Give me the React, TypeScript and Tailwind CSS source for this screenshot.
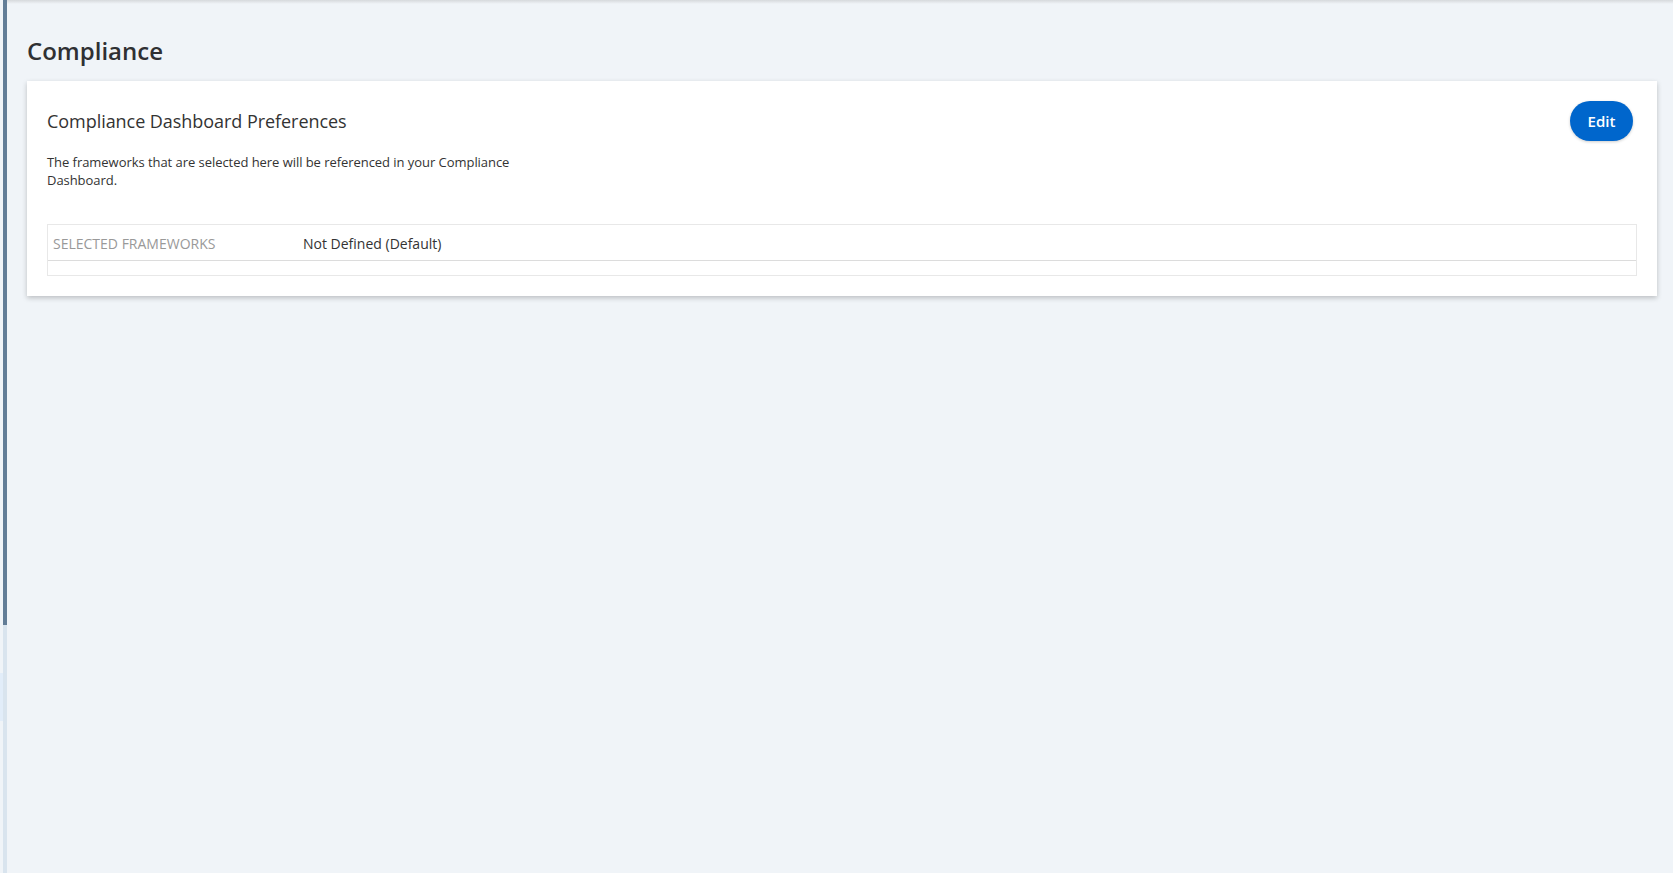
import React from "react";

export default function App() {
  return (
    <div
      className="flex h-[873px] w-full overflow-hidden bg-[#f0f4f8] text-[#333]"
      style={{ fontFamily: '"Open Sans", "Noto Sans", sans-serif' }}
    >
      {/* left edge strip */}
      <div className="flex h-full w-[7px] shrink-0">
        <div className="flex h-full w-[3px] flex-col">
          <div className="h-[673px]" />
          <div className="h-[48px] bg-[#e2edf9]" />
        </div>
        <div className="flex h-full w-[4px] flex-col bg-[#d9e4ee]">
          <div className="h-[625px] bg-[#627d97]" />
        </div>
      </div>

      {/* main */}
      <div className="relative flex-1 pl-[20px] pr-[16px] pt-[35px]">
        <div className="pointer-events-none absolute inset-x-0 top-0 h-[4px] bg-gradient-to-b from-[#d6d9dc] to-transparent" />
        <h1 className="text-[24px] font-semibold leading-[32px] text-[#2f3033]">
          Compliance
        </h1>

        <div className="mt-[14px] bg-white p-[20px] shadow-[0_2px_5px_rgba(0,0,0,0.22)]">
          <div className="flex h-[40px] items-center justify-between">
            <h2 className="text-[18px] font-normal leading-[27px] tracking-[-0.05px] text-[#333]">
              Compliance Dashboard Preferences
            </h2>
            <button className="mr-[4px] flex h-[40px] w-[63px] items-center justify-center rounded-full bg-[#0066cc] text-[15px] font-semibold text-white shadow-[0_1px_3px_rgba(0,0,0,0.2)]">
              Edit
            </button>
          </div>

          <p className="mt-[12px] max-w-[475px] text-[13px] leading-[18px] tracking-[-0.05px] text-[#333]">
            The frameworks that are selected here will be referenced in your Compliance Dashboard.
          </p>

          <div className="mt-[35px] border border-[#e8e8e8]">
            <div className="flex h-[36px] items-center border-b border-[#dcdcdc] px-[5px] pt-[1px]">
              <div className="w-[250px] text-[14px] text-[#999]">SELECTED FRAMEWORKS</div>
              <div className="text-[14px] text-[#333]">Not Defined (Default)</div>
            </div>
            <div className="h-[14px]" />
          </div>
        </div>
      </div>
    </div>
  );
}
